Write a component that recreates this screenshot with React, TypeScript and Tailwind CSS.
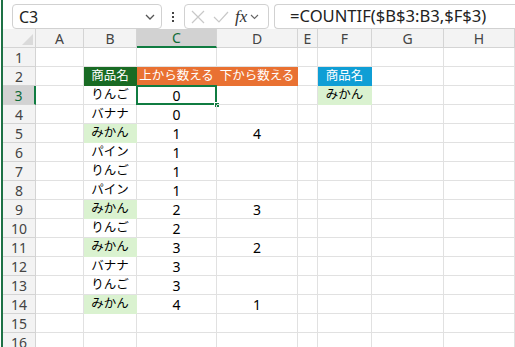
import React from "react";

type Cell = { v?: string; fill?: "green" | "orange" | "blue" | "light" };

const cols = ["A", "B", "C", "D", "E", "F", "G", "H"];

// rows 1..16, columns A..H
const rows: Record<number, Record<string, Cell>> = {
  2: {
    B: { v: "商品名", fill: "green" },
    C: { v: "上から数える", fill: "orange" },
    D: { v: "下から数える", fill: "orange" },
    F: { v: "商品名", fill: "blue" },
  },
  3: { B: { v: "りんご" }, C: { v: "0" }, F: { v: "みかん", fill: "light" } },
  4: { B: { v: "バナナ" }, C: { v: "0" } },
  5: { B: { v: "みかん", fill: "light" }, C: { v: "1" }, D: { v: "4" } },
  6: { B: { v: "パイン" }, C: { v: "1" } },
  7: { B: { v: "りんご" }, C: { v: "1" } },
  8: { B: { v: "パイン" }, C: { v: "1" } },
  9: { B: { v: "みかん", fill: "light" }, C: { v: "2" }, D: { v: "3" } },
  10: { B: { v: "りんご" }, C: { v: "2" } },
  11: { B: { v: "みかん", fill: "light" }, C: { v: "3" }, D: { v: "2" } },
  12: { B: { v: "バナナ" }, C: { v: "3" } },
  13: { B: { v: "りんご" }, C: { v: "3" } },
  14: { B: { v: "みかん", fill: "light" }, C: { v: "4" }, D: { v: "1" } },
};

const fillClass = {
  green: "bg-[#196b24] border-[#196b24] text-white",
  orange: "bg-[#e97132] border-[#e97132] text-white",
  blue: "bg-[#0f9ed5] border-[#0f9ed5] text-white",
  light: "bg-[#daf2d0] border-[#daf2d0] text-black",
};

function Toolbar() {
  return (
    <div className="flex h-[36px] items-start bg-white pt-[4px]">
      <div className="ml-[9px] flex h-[25px] w-[150px] items-center justify-between rounded-[4px] border border-[#d1d1d1] pl-[6px] pr-[6px]">
        <span className="text-[16px] text-[#222]">C3</span>
        <svg width="10" height="6" viewBox="0 0 10 6">
          <path d="M1 1 L5 5 L9 1" fill="none" stroke="#555" strokeWidth="1.3" />
        </svg>
      </div>
      <div className="flex h-[25px] w-[22px] flex-col items-center justify-center gap-[2px]">
        <span className="h-[2px] w-[2px] bg-[#444]" />
        <span className="h-[2px] w-[2px] bg-[#444]" />
        <span className="h-[2px] w-[2px] bg-[#444]" />
      </div>
      <div className="flex h-[25px] w-[85px] items-center rounded-[4px] border border-[#d1d1d1] pl-[4px]">
        <svg width="16" height="16" viewBox="0 0 16 16" className="ml-[1px]">
          <path d="M2 2 L14 14 M14 2 L2 14" stroke="#c8c8c8" strokeWidth="1.2" />
        </svg>
        <svg width="18" height="16" viewBox="0 0 18 16" className="ml-[6px]">
          <path d="M2 8 L7 13 L16 3" fill="none" stroke="#c8c8c8" strokeWidth="1.2" />
        </svg>
        <span className="ml-[5px] font-['Liberation_Serif',serif] text-[17px] italic leading-none text-[#333]">
          fx
        </span>
        <svg width="9" height="6" viewBox="0 0 9 6" className="ml-[3px]">
          <path d="M1 1 L4.5 4.5 L8 1" fill="none" stroke="#666" strokeWidth="1.1" />
        </svg>
      </div>
      <div className="ml-[5px] flex h-[25px] flex-1 items-center rounded-l-[4px] border border-r-0 border-[#d1d1d1] pl-[15px]">
        <span className="text-[16.6px] text-[#222]">=COUNTIF($B$3:B3,$F$3)</span>
      </div>
    </div>
  );
}

function Grid() {
  const rowNums = Array.from({ length: 16 }, (_, i) => i + 1);
  return (
    <div className="grid grid-cols-[33px_48px_53px_80px_81px_20px_54px_72px_1fr] auto-rows-[19px] text-[12.5px]">
      {/* corner */}
      <div className="relative border-b border-r border-[#d4d4d4] bg-[#f3f3f3]">
        <svg width="11" height="11" viewBox="0 0 12 12" className="absolute bottom-[2px] right-[2px]">
          <path d="M12 0 L12 12 L0 12 Z" fill="#dadada" />
        </svg>
      </div>
      {cols.map((c) => (
        <div
          key={"h" + c}
          className={
            c === "C"
              ? "flex items-center justify-center border-b-2 border-r border-b-[#107c41] border-r-[#d4d4d4] bg-[#d2d2d2] text-[14px] text-[#0e6b37]"
              : "flex items-center justify-center border-b border-r border-[#d4d4d4] bg-[#f3f3f3] text-[14px] text-[#444]"
          }
        >
          {c}
        </div>
      ))}
      {rowNums.map((r) => (
        <React.Fragment key={r}>
          <div
            className={
              r === 3
                ? "flex items-center justify-center border-b border-r-2 border-b-[#d4d4d4] border-r-[#107c41] bg-[#d2d2d2] text-[14px] text-[#0e6b37]"
                : "flex items-center justify-center border-b border-r border-[#d4d4d4] bg-[#f3f3f3] text-[14px] text-[#444]"
            }
          >
            {r}
          </div>
          {cols.map((c) => {
            const cell = rows[r]?.[c];
            const isNum = cell?.v !== undefined && /^\d+$/.test(cell.v);
            const base =
              "relative flex items-center justify-center whitespace-nowrap border-b border-r " +
              (isNum ? "text-[14px] " : "");
            const cls = cell?.fill ? fillClass[cell.fill] : "border-[#e1e1e1] text-black";
            return (
              <div key={c} className={base + cls}>
                {cell?.v}
                {r === 3 && c === "C" && (
                  <>
                    <div className="absolute left-[-1px] top-[-1px] h-[20px] w-[81px] border-2 border-[#107c41]" />
                    <div className="absolute bottom-[-4px] right-[-4px] h-[6px] w-[6px] border border-white bg-[#107c41]" />
                  </>
                )}
              </div>
            );
          })}
        </React.Fragment>
      ))}
    </div>
  );
}

export default function App() {
  return (
    <div className="flex h-[347px] w-[515px] overflow-hidden bg-white font-['Noto_Sans','Noto_Sans_CJK_JP',sans-serif]">
      <div className="ml-[1px] w-[2px] shrink-0 bg-[#1e7145]" />
      <div className="flex min-w-0 flex-1 flex-col">
        <Toolbar />
        <Grid />
      </div>
    </div>
  );
}
